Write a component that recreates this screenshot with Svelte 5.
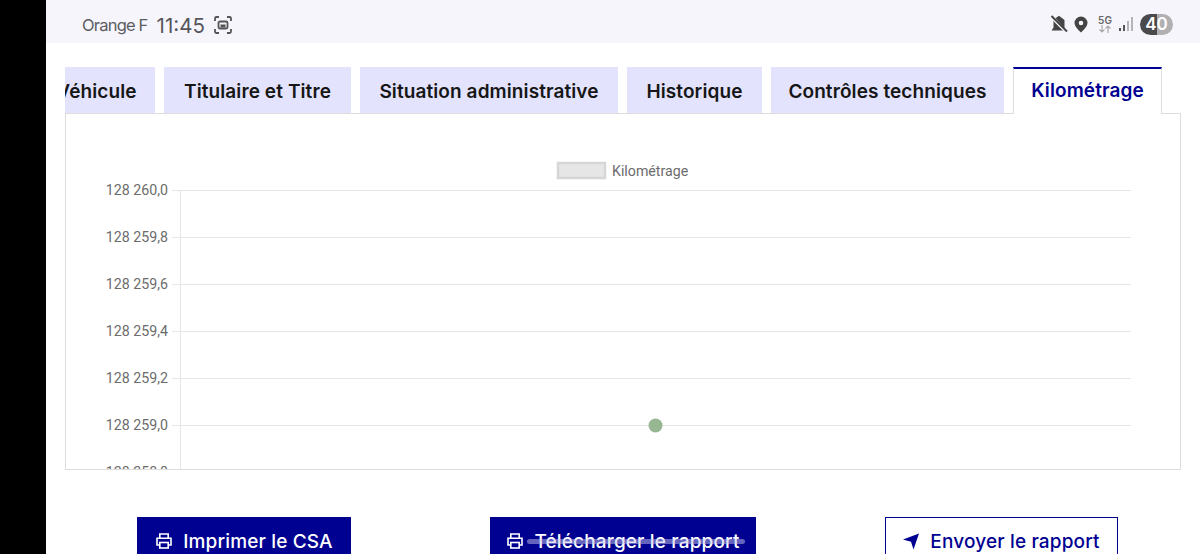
<script>
  const ticks = [
    { y: 76.5, label: '128 260,0' },
    { y: 123.5, label: '128 259,8' },
    { y: 170.5, label: '128 259,6' },
    { y: 217.5, label: '128 259,4' },
    { y: 264.5, label: '128 259,2' },
    { y: 311.5, label: '128 259,0' },
    { y: 358.5, label: '128 258,8' }
  ];
  const tabs = [
    { label: 'Véhicule', width: 117 },
    { label: 'Titulaire et Titre', width: 187 },
    { label: 'Situation administrative', width: 258 },
    { label: 'Historique', width: 135 },
    { label: 'Contrôles techniques', width: 233 }
  ];
</script>

<div class="screen">
  <div class="bezel"></div>
  <main class="page">
    <header class="status">
      <div class="status-left">
        <span class="carrier">Orange F</span>
        <span class="clock">11:45</span>
        <svg class="shot" width="20" height="20" viewBox="0 0 20 20" fill="none" stroke="#555" stroke-width="1.8">
          <path d="M2 6V3.500A1.500 1.500 0 0 1 3.500 2H6M14 2h2.500A1.500 1.500 0 0 1 18 3.500V6M18 14v2.500a1.500 1.500 0 0 1-1.500 1.500H14M6 18H3.500A1.500 1.500 0 0 1 2 16.500V14" />
          <rect x="5.500" y="6.500" width="9" height="7" rx="1.500" />
          <rect x="7.500" y="9.500" width="5" height="3" fill="#555" stroke="none" />
        </svg>
      </div>
      <div class="status-right">
        <svg class="mute" width="18" height="18" viewBox="0 0 18 18">
          <path d="M3 5 13.500 15.500H1.500L3.500 12.500V7.500Z" fill="#444" />
          <path d="M5.500 3.300 9 .8l5.500 4.200v8.500Z" fill="#444" />
          <path d="M1 2.200 16 17.200" stroke="#f6f5fc" stroke-width="2" />
          <path d="M1.500 1 17 16.500" stroke="#444" stroke-width="2" />
        </svg>
        <svg class="pin" width="14" height="17" viewBox="0 0 14 17">
          <path fill-rule="evenodd" fill="#444" d="M7 .5A6.500 6.500 0 0 0 .5 7C.5 11 7 16.500 7 16.500S13.500 11 13.500 7A6.500 6.500 0 0 0 7 .500Zm0 4.200a2.300 2.300 0 1 1 0 4.600 2.300 2.300 0 0 1 0-4.600Z" />
        </svg>
        <div class="net">
          <span>5G</span>
          <svg width="14" height="8" viewBox="0 0 14 8" fill="none" stroke="#aaa" stroke-width="1.200">
            <path d="M4 0v7M1.500 4.500 4 7l2.500-2.500M10 8V1M7.500 3.500 10 1l2.500 2.500" />
          </svg>
        </div>
        <svg class="signal" width="14" height="15" viewBox="0 0 14 15">
          <rect x="0" y="11" width="2" height="3" fill="#555" />
          <rect x="4" y="8" width="2" height="6" fill="#555" />
          <rect x="8" y="4" width="2" height="10" fill="#b5b5b5" />
          <rect x="12" y="0" width="2" height="14" fill="#b5b5b5" />
        </svg>
        <div class="battery">40</div>
      </div>
    </header>

    <div class="tabs-wrap">
      <div class="tabs">
        {#each tabs as tab}
          <div class="tab" style="width: {tab.width}px">{tab.label}</div>
        {/each}
        <div class="tab active">Kilométrage</div>
      </div>
    </div>

    <section class="panel">
      <svg class="chart" width="1114" height="355" viewBox="0 0 1114 355">
        <rect x="492" y="49" width="47" height="15" fill="#e6e6e6" stroke="#d6d6d6" stroke-width="2.500" />
        <text x="546" y="61.500" class="legend">Kilométrage</text>
        {#each ticks as t}
          <line x1="106" x2="1065" y1={t.y} y2={t.y} class="grid" />
          <text x="102" y={t.y + 4} text-anchor="end" class="tick">{t.label}</text>
        {/each}
        <line x1="114.500" x2="114.500" y1="76" y2="355" class="grid" />
        <circle cx="589.500" cy="311.500" r="7" fill="#97b793" />
      </svg>
    </section>

    <div class="actions">
      <div class="cell">
        <button class="btn primary csa">
          <svg width="18" height="18" viewBox="0 0 18 18" fill="none" stroke="currentColor" stroke-width="1.600">
            <path d="M4.800 6V2h8.400v4M4.800 13H2V6.200h14V13h-2.800" />
            <rect x="4.800" y="10.500" width="8.400" height="5.500" />
          </svg>
          Imprimer le CSA
        </button>
      </div>
      <div class="cell">
        <button class="btn primary dl">
          <svg width="18" height="18" viewBox="0 0 18 18" fill="none" stroke="currentColor" stroke-width="1.600">
            <path d="M4.800 6V2h8.400v4M4.800 13H2V6.200h14V13h-2.800" />
            <rect x="4.800" y="10.500" width="8.400" height="5.500" />
          </svg>
          Télécharger le rapport
        </button>
      </div>
      <div class="cell">
        <button class="btn outline send">
          <svg width="18" height="18" viewBox="0 0 18 18" fill="currentColor">
            <path d="M1 7.500 17 1.500 11.500 17.500 9 9.800Z" />
          </svg>
          Envoyer le rapport
        </button>
      </div>
    </div>
    <div class="gesture"></div>
  </main>
</div>

<style>
  :global(body) {
    margin: 0;
    background: #fff;
    overflow: hidden;
  }
  .screen {
    display: flex;
    width: 1200px;
    height: 554px;
    overflow: hidden;
    font-family: "Inter", "Noto Sans", sans-serif;
  }
  .bezel {
    width: 46px;
    flex: none;
    background: #000;
  }
  .page {
    position: relative;
    flex: 1;
    min-width: 0;
  }
  .status {
    height: 43px;
    box-sizing: border-box;
    background: #f6f5fc;
    display: flex;
    align-items: center;
    justify-content: space-between;
    padding: 7px 27px 0 36px;
  }
  .status-left, .status-right {
    display: flex;
    align-items: center;
  }
  .carrier {
    font-size: 16.500px;
    letter-spacing: -0.8px;
    color: #5c5c60;
    margin-right: 9px;
  }
  .clock {
    font-size: 20.500px;
    color: #55555a;
    margin-right: 8px;
  }
  .status-right svg { flex: none; }
  .status-right { margin-top: -2px; }
  .mute { margin-right: 6px; }
  .net {
    display: flex;
    flex-direction: column;
    align-items: center;
    margin: 0 7px 0 10px;
    font-size: 10px;
    line-height: 10px;
    font-weight: 600;
    color: #666;
  }
  .signal { margin-right: 7px; }
  .battery {
    width: 33px;
    height: 21px;
    border-radius: 11px;
    background: linear-gradient(90deg, #4a4a4d 0 50%, #b0b0b2 50%);
    color: #fff;
    font-size: 17px;
    font-weight: 600;
    line-height: 21px;
    text-align: center;
  }
  .tabs-wrap {
    margin: 24px 0 0 19px;
    width: 1116px;
    overflow: hidden;
    position: relative;
    z-index: 1;
  }
  .tabs {
    display: flex;
    justify-content: flex-end;
    gap: 9px;
    width: 1097px;
    height: 47px;
    align-items: stretch;
  }
  .tab {
    flex: none;
    display: flex;
    align-items: center;
    justify-content: center;
    box-sizing: border-box;
    padding-top: 2px;
    background: #e3e3fd;
    color: #161616;
    font-size: 19px;
    font-weight: 600;
    letter-spacing: 0.1px;
    height: 46px;
    white-space: nowrap;
  }
  .tab.active {
    background: #fff;
    color: #000091;
    height: 47px;
    width: 149px;
    border-top: 2px solid #000091;
    border-left: 1px solid #ddd;
    border-right: 1px solid #ddd;
    padding: 0 0 2px;
  }
  .panel {
    margin-left: 19px;
    width: 1116px;
    height: 357px;
    box-sizing: border-box;
    border: 1px solid #ddd;
    margin-top: -1px;
    background: #fff;
  }
  .chart {
    display: block;
    overflow: hidden;
  }
  .grid {
    stroke: #e6e6e6;
    stroke-width: 1;
  }
  .tick, .legend {
    font-family: "Roboto", sans-serif;
    font-size: 14.200px;
    fill: #6c6c6c;
  }
  .actions {
    display: grid;
    grid-template-columns: repeat(3, 379px);
    justify-content: center;
    margin-top: 47px;
  }
  .cell {
    display: flex;
    justify-content: center;
  }
  .btn {
    display: flex;
    align-items: center;
    justify-content: center;
    gap: 10px;
    height: 48px;
    padding: 0;
    box-sizing: border-box;
    font-family: inherit;
    font-size: 19px;
    font-weight: 500;
    letter-spacing: 0.15px;
    white-space: nowrap;
    border: 1px solid #000091;
  }
  .csa { width: 214px; }
  .dl { width: 266px; }
  .send { width: 233px; margin-right: 2px; }
  .primary {
    background: #000091;
    color: #fff;
  }
  .outline {
    background: #fff;
    color: #000091;
  }
  .gesture {
    position: absolute;
    left: 481px;
    top: 539px;
    width: 218px;
    height: 5px;
    border-radius: 3px;
    background: rgba(200, 200, 235, 0.5);
  }
</style>
